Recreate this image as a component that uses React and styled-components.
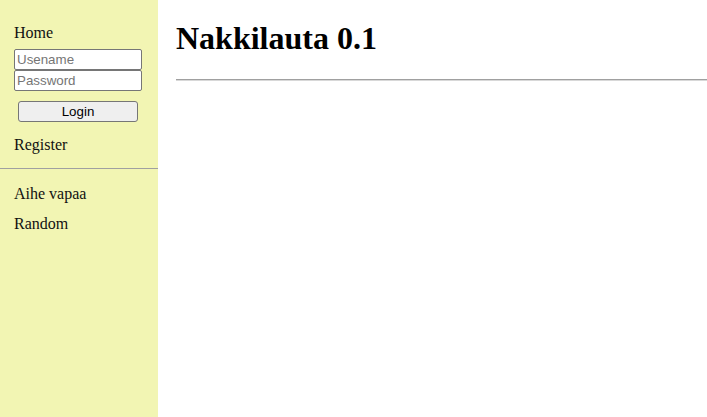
import React from 'react';
import styled, { createGlobalStyle } from 'styled-components';

const GlobalStyle = createGlobalStyle`
    html, body {
        margin: 0;
        padding: 0;
        background: #fff;
        font-family: "Liberation Serif", "Times New Roman", serif;
        color: #000;
    }
`;

const Page = styled.div`
    display: flex;
    min-height: 100vh;
`;

const Sidebar = styled.aside`
    width: 158px;
    flex-shrink: 0;
    background: #f2f5b3;
    display: flex;
    flex-direction: column;
    padding-top: 24px;
`;

const Section = styled.div`
    display: flex;
    flex-direction: column;
    padding: 0 14px;
`;

const NavItem = styled.div`
    font-size: 16px;
    line-height: 18px;
    color: #111;
    margin-top: ${(p) => p.gap || 0}px;
`;

const LoginForm = styled.form`
    display: flex;
    flex-direction: column;
    margin-top: 7px;
`;

const Field = styled.input`
    box-sizing: border-box;
    width: 128px;
    height: 21px;
    margin: 0;
    padding: 1px 2px;
    border: 1px solid #767676;
    border-radius: 2px;
    background: #fff;
    font-family: "Liberation Sans", Arial, sans-serif;
    font-size: 13.33px;
    &::placeholder {
        color: #757575;
    }
`;

const Button = styled.button`
    box-sizing: border-box;
    width: 120px;
    height: 21px;
    margin: 10px 0 0 4px;
    padding: 0;
    border: 1px solid #767676;
    border-radius: 3px;
    background: #efefef;
    color: #000;
    font-family: "Liberation Sans", Arial, sans-serif;
    font-size: 13.33px;
`;

const Divider = styled.hr`
    width: 100%;
    height: 0;
    margin: 14px 0 16px;
    border: none;
    border-top: 1px solid #a0a0a0;
`;

const Main = styled.main`
    flex: 1;
    padding-left: 18px;
`;

const Title = styled.h1`
    font-size: 32px;
    font-weight: bold;
    margin: 20px 0 22px;
`;

const Rule = styled.hr`
    margin: 0;
    height: 0;
    border: none;
    border-top: 1px solid #a0a0a0;
    border-bottom: 1px solid #d8d8d8;
`;

const App = () => (
    <>
        <GlobalStyle />
        <Page>
            <Sidebar>
                <Section>
                    <NavItem>Home</NavItem>
                    <LoginForm onSubmit={(e) => e.preventDefault()}>
                        <Field type="text" placeholder="Usename" />
                        <Field type="password" placeholder="Password" />
                        <Button type="submit">Login</Button>
                    </LoginForm>
                    <NavItem gap={14}>Register</NavItem>
                </Section>
                <Divider />
                <Section>
                    <NavItem>Aihe vapaa</NavItem>
                    <NavItem gap={12}>Random</NavItem>
                </Section>
            </Sidebar>
            <Main>
                <Title>Nakkilauta 0.1</Title>
                <Rule />
            </Main>
        </Page>
    </>
);

export default App;
